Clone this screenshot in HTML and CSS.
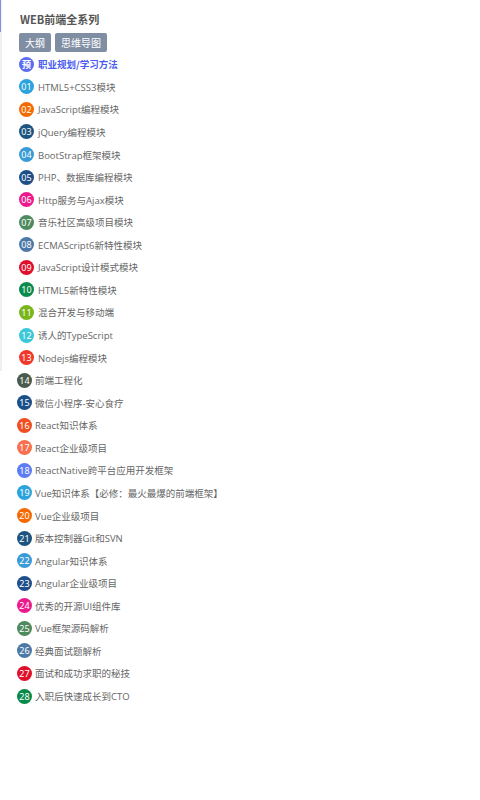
FILE: index.html
```html
<!DOCTYPE html>
<html lang="zh">
<head>
<meta charset="utf-8">
<link rel="stylesheet" href="styles.css">
</head>
<body>
<div class="page">
  <aside class="side">
    <h1 class="title">WEB前端全系列</h1>
    <div class="btns">
      <span class="btn">大纲</span>
      <span class="btn">思维导图</span>
    </div>
    <ul class="list first">
      <li class="row active"><span class="num c-pre">预</span><span class="txt">职业规划/学习方法</span></li>
      <li class="row"><span class="num c1">01</span><span class="txt">HTML5+CSS3模块</span></li>
      <li class="row"><span class="num c2">02</span><span class="txt">JavaScript编程模块</span></li>
      <li class="row"><span class="num c3">03</span><span class="txt">jQuery编程模块</span></li>
      <li class="row"><span class="num c4">04</span><span class="txt">BootStrap框架模块</span></li>
      <li class="row"><span class="num c5">05</span><span class="txt">PHP、数据库编程模块</span></li>
      <li class="row"><span class="num c6">06</span><span class="txt">Http服务与Ajax模块</span></li>
      <li class="row"><span class="num c7">07</span><span class="txt">音乐社区高级项目模块</span></li>
      <li class="row"><span class="num c8">08</span><span class="txt">ECMAScript6新特性模块</span></li>
      <li class="row"><span class="num c9">09</span><span class="txt">JavaScript设计模式模块</span></li>
      <li class="row"><span class="num c10">10</span><span class="txt">HTML5新特性模块</span></li>
      <li class="row"><span class="num c11">11</span><span class="txt">混合开发与移动端</span></li>
      <li class="row"><span class="num c12">12</span><span class="txt">诱人的TypeScript</span></li>
      <li class="row"><span class="num c13">13</span><span class="txt">Nodejs编程模块</span></li>
    </ul>
    <ul class="list rest">
      <li class="row"><span class="num c14">14</span><span class="txt">前端工程化</span></li>
      <li class="row"><span class="num c15">15</span><span class="txt">微信小程序-安心食疗</span></li>
      <li class="row"><span class="num c16">16</span><span class="txt">React知识体系</span></li>
      <li class="row"><span class="num c17">17</span><span class="txt">React企业级项目</span></li>
      <li class="row"><span class="num c18">18</span><span class="txt">ReactNative跨平台应用开发框架</span></li>
      <li class="row"><span class="num c1">19</span><span class="txt">Vue知识体系【必修：最火最爆的前端框架】</span></li>
      <li class="row"><span class="num c2">20</span><span class="txt">Vue企业级项目</span></li>
      <li class="row"><span class="num c3">21</span><span class="txt">版本控制器Git和SVN</span></li>
      <li class="row"><span class="num c4">22</span><span class="txt">Angular知识体系</span></li>
      <li class="row"><span class="num c5">23</span><span class="txt">Angular企业级项目</span></li>
      <li class="row"><span class="num c6">24</span><span class="txt">优秀的开源UI组件库</span></li>
      <li class="row"><span class="num c7">25</span><span class="txt">Vue框架源码解析</span></li>
      <li class="row"><span class="num c8">26</span><span class="txt">经典面试题解析</span></li>
      <li class="row"><span class="num c9">27</span><span class="txt">面试和成功求职的秘技</span></li>
      <li class="row"><span class="num c10">28</span><span class="txt">入职后快速成长到CTO</span></li>
    </ul>
  </aside>
</div>
</body>
</html>
```

FILE: styles.css
```css
html, body {
  margin: 0;
  padding: 0;
  background: #fff;
}
body {
  font-family: "Open Sans", "Noto Sans CJK SC", sans-serif;
  color: #666;
}
.page {
  width: 480px;
  height: 800px;
  position: relative;
}
.page::before {
  content: "";
  position: absolute;
  left: 0;
  top: 0;
  width: 2px;
  height: 371px;
  background: #efefef;
}
.page::after {
  content: "";
  position: absolute;
  left: 0;
  top: 0;
  width: 1px;
  height: 32px;
  background: #8c8cf0;
}
.side {
  padding: 11px 0 0 19px;
}
.title {
  margin: 0 0 0 1px;
  font-size: 11px;
  line-height: 16px;
  font-weight: bold;
  color: #555;
  font-family: "Noto Sans CJK SC", sans-serif;
}
.btns {
  display: flex;
  gap: 4px;
  margin-top: 6px;
}
.btn {
  display: inline-block;
  background: #7f8ea3;
  color: #fff;
  font-size: 10px;
  line-height: 19px;
  height: 19px;
  padding: 0 6px;
  border-radius: 2px;
  font-family: "Noto Sans CJK SC", sans-serif;
}
.list {
  list-style: none;
  margin: 0;
  padding: 0;
}
.list.first {
  margin-top: 1px;
}
.list.rest {
  margin-left: -2px;
}
.row {
  display: flex;
  align-items: center;
  height: 22.57px;
  font-size: 9.5px;
  color: #666;
}
.row.active .txt {
  color: #4a5cf0;
  font-weight: bold;
  font-family: "Noto Sans CJK SC", sans-serif;
}
.num {
  flex: none;
  width: 15px;
  height: 15px;
  border-radius: 50%;
  color: #fff;
  font-size: 9px;
  line-height: 15px;
  text-align: center;
  margin-right: 4px;
  font-family: "Noto Sans", "Noto Sans CJK SC", sans-serif;
}
.list.rest .num {
  margin-right: 3px;
}
.c-pre { background: #5b6cf0; font-weight: bold; font-family: "Noto Sans CJK SC", sans-serif; }
.c1 { background: #2ba3dc; }
.c2 { background: #f56a00; }
.c3 { background: #1d5580; }
.c4 { background: #3a9bd6; }
.c5 { background: #1f4f8a; }
.c6 { background: #ec1a8c; }
.c7 { background: #4f8a5f; }
.c8 { background: #4d79a6; }
.c9 { background: #e0102a; }
.c10 { background: #0a8a4a; }
.c11 { background: #7ab51d; }
.c12 { background: #3cc8d8; }
.c13 { background: #f0392a; }
.c14 { background: #4a5a4c; }
.c15 { background: #1a4f8a; }
.c16 { background: #f04e23; }
.c17 { background: #f87050; }
.c18 { background: #5b7cf5; }
```
